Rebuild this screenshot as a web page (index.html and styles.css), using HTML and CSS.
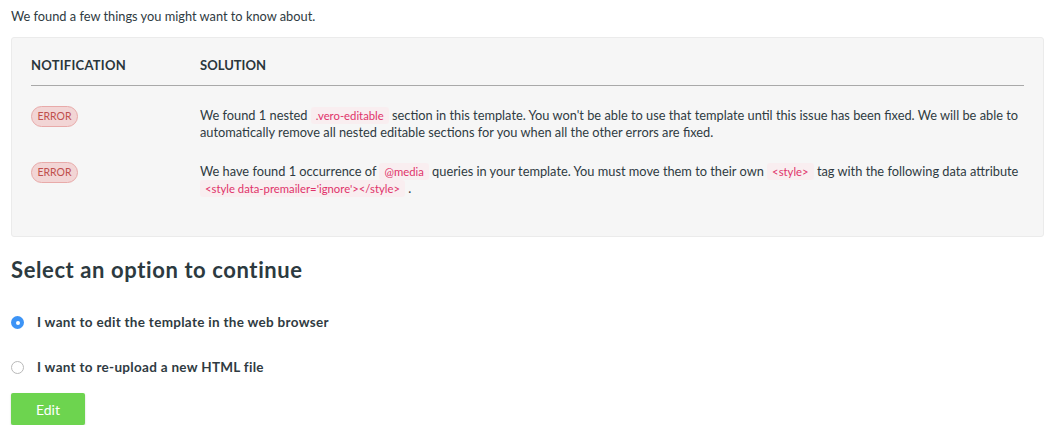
FILE: index.html
```html
<!DOCTYPE html>
<html>
<head>
<meta charset="utf-8">
<link rel="stylesheet" href="styles.css">
</head>
<body>
<div class="page">
  <p class="intro">We found a few things you might want to know about.</p>
  <div class="panel">
    <div class="thead">
      <div class="col-notif">Notification</div>
      <div class="col-sol">Solution</div>
    </div>
    <div class="row">
      <div class="col-notif"><span class="badge">ERROR</span></div>
      <div class="col-sol">We found 1 nested <code>.vero-editable</code> section in this template. You won't be able to use that template until this issue has been fixed. We will be able to automatically remove all nested editable sections for you when all the other errors are fixed.</div>
    </div>
    <div class="row">
      <div class="col-notif"><span class="badge">ERROR</span></div>
      <div class="col-sol">We have found 1 occurrence of <code>@media</code> queries in your template. You must move them to their own <code>&lt;style&gt;</code> tag with the following data attribute <code>&lt;style data-premailer='ignore'&gt;&lt;/style&gt;</code> .</div>
    </div>
  </div>
  <h2 class="title">Select an option to continue</h2>
  <div class="options">
    <label class="option"><span class="radio checked"></span>I want to edit the template in the web browser</label>
    <label class="option"><span class="radio"></span>I want to re-upload a new HTML file</label>
  </div>
  <button class="btn">Edit</button>
</div>
</body>
</html>
```
FILE: styles.css
```css
html, body {
  margin: 0;
  padding: 0;
  background: #fff;
}
body {
  font-family: Lato, "Liberation Sans", sans-serif;
  font-size: 12.8px;
  color: #2f3b42;
}
.page {
  padding: 0 12px 0 11px;
}
.intro {
  margin: 0;
  padding-top: 8px;
  line-height: 17px;
  height: 29px;
}
.panel {
  background: #f6f6f6;
  border: 1px solid #ebebeb;
  border-radius: 3px;
  padding: 0 19px 0 19px;
  height: 198px;
}
.thead {
  display: flex;
  font-weight: 700;
  font-size: 13px;
  letter-spacing: 0.25px;
  text-transform: uppercase;
  border-bottom: 1px solid #a9a9a9;
  padding-top: 19px;
  height: 28px;
  line-height: 17px;
  color: #2a363c;
}
.col-notif {
  width: 169px;
  flex: none;
}
.col-sol {
  flex: 1;
  line-height: 17px;
  letter-spacing: 0;
}
.row {
  display: flex;
  margin-top: 21px;
}
.row + .row {
  margin-top: 22px;
}
.badge {
  display: inline-block;
  box-sizing: border-box;
  height: 21px;
  width: 47px;
  line-height: 19px;
  text-align: center;
  font-size: 10.5px;
  color: #c0504d;
  background: #f2d5d5;
  border: 1px solid #e8aaa9;
  border-radius: 11px;
  margin-top: -2px;
}
code {
  display: inline-block;
  font-family: inherit;
  font-size: 11.3px;
  line-height: 17px;
  vertical-align: top;
  color: #e0336a;
  background: #f9eef0;
  padding: 0 5px;
  border-radius: 3px;
}
.title {
  margin: 0;
  padding-top: 20px;
  font-size: 22px;
  letter-spacing: 0.6px;
  font-weight: 700;
  line-height: 26px;
  color: #2c3a40;
}
.options {
  display: flex;
  flex-direction: column;
  padding-top: 29px;
  gap: 24px;
}
.option {
  display: flex;
  align-items: center;
  font-weight: 700;
  font-size: 13.5px;
  letter-spacing: 0.3px;
  line-height: 21px;
  color: #2f3b42;
}
.radio {
  box-sizing: border-box;
  width: 13px;
  height: 13px;
  border-radius: 50%;
  border: 1px solid #b9b9b9;
  background: #fff;
  margin-right: 13px;
  position: relative;
}
.radio.checked {
  border: none;
  background: #3d94f6;
}
.radio.checked::after {
  content: "";
  position: absolute;
  left: 4.5px;
  top: 4.5px;
  width: 4px;
  height: 4px;
  border-radius: 50%;
  background: #fff;
}
.btn {
  display: block;
  margin-top: 15px;
  width: 74px;
  height: 32px;
  border: none;
  border-radius: 2px;
  background: #6dd44f;
  color: #fff;
  font-family: inherit;
  font-size: 14px;
  box-shadow: 0 1px 2px rgba(0,0,0,0.2);
}
```
